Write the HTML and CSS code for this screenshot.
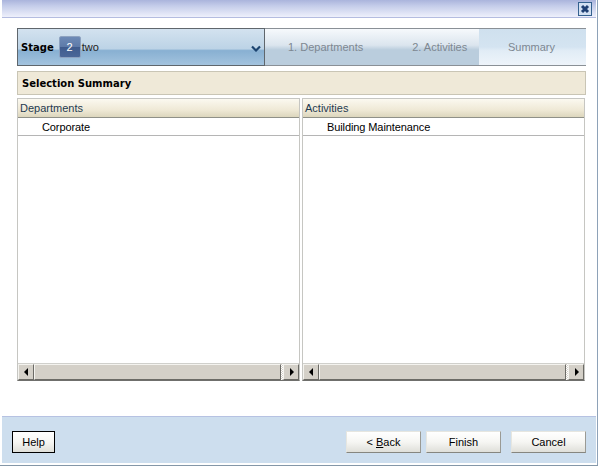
FILE: index.html
```html
<!DOCTYPE html>
<html lang="en">
<head>
<meta charset="utf-8">
<title>Selection Summary</title>
<link rel="stylesheet" href="styles.css">
</head>
<body>
<div class="frame">
<div class="window">
  <header class="titlebar">
    <button class="close" aria-label="Close">
      <svg width="14" height="14" viewBox="0 0 14 14"><path d="M4 4l6 6M10 4l-6 6" stroke="#1f3f73" stroke-width="3" fill="none"/></svg>
    </button>
  </header>
  <main class="content">
    <nav class="train">
      <div class="stage">
        <span class="stage-label">Stage</span>
        <span class="stage-num">2</span>
        <span class="stage-name">two</span>
        <svg class="chevron" width="10" height="7" viewBox="0 0 10 7"><path d="M1 1.500l4 4 4-4" stroke="#1c4470" stroke-width="2.200" fill="none"/></svg>
      </div>
      <div class="steps">
        <span class="step step-one">1. Departments</span>
        <span class="step step-two">2. Activities</span>
      </div>
      <div class="current">Summary</div>
    </nav>
    <h1 class="section">Selection Summary</h1>
    <div class="panels">
      <section class="panel">
        <div class="panel-head">Departments</div>
        <div class="row">Corporate</div>
        <div class="panel-fill"></div>
        <div class="hscroll">
          <span class="sbtn"><svg width="5" height="8" viewBox="0 0 5 8"><path d="M4 0v8L0 4z"/></svg></span>
          <span class="thumb"></span>
          <span class="track"></span>
          <span class="sbtn"><svg width="5" height="8" viewBox="0 0 5 8"><path d="M1 0v8l4-4z"/></svg></span>
        </div>
      </section>
      <section class="panel">
        <div class="panel-head">Activities</div>
        <div class="row">Building Maintenance</div>
        <div class="panel-fill"></div>
        <div class="hscroll">
          <span class="sbtn"><svg width="5" height="8" viewBox="0 0 5 8"><path d="M4 0v8L0 4z"/></svg></span>
          <span class="thumb"></span>
          <span class="track"></span>
          <span class="sbtn"><svg width="5" height="8" viewBox="0 0 5 8"><path d="M1 0v8l4-4z"/></svg></span>
        </div>
      </section>
    </div>
  </main>
  <footer class="footer">
    <button class="btn btn-help">Help</button>
    <div class="actions">
      <button class="btn btn-nav">&lt; <u>B</u>ack</button>
      <button class="btn btn-nav">Finish</button>
      <button class="btn btn-nav btn-cancel">Cancel</button>
    </div>
  </footer>
</div>
</div>
</body>
</html>
```
FILE: styles.css
```css
html, body { margin: 0; padding: 0; background: #fff; }
body { width: 600px; height: 467px; overflow: hidden; font-family: "Liberation Sans", Arial, sans-serif; font-size: 11px; color: #000; }
.frame { box-sizing: border-box; width: 598px; height: 466px; padding-left: 2px; border-bottom: 1px solid #8497a8; }
.window { box-sizing: border-box; width: 596px; height: 465px; padding: 0 1px 2px 0; border-right: 1px solid #8ea2b8; display: flex; flex-direction: column; }
.titlebar { box-sizing: border-box; height: 18px; flex: none; background: linear-gradient(#aab4dc 0, #c5cdea 6px, #eef0fb 100%); border-bottom: 1px solid #b4bce0; display: flex; justify-content: flex-end; align-items: flex-start; padding: 2px 4px 0 0; }
.close { box-sizing: border-box; width: 14px; height: 14px; padding: 0; border: 1px solid #34618f; background: #d3e0f2; display: block; overflow: hidden; }
.close svg { display: block; margin: -1px; }
.content { flex: 1; padding: 10px 10px 0 15px; display: flex; flex-direction: column; min-height: 0; }
.train { box-sizing: border-box; display: flex; height: 38px; flex: none; border-top: 1px solid #8a9096; border-bottom: 1px solid #8a9096; }
.stage { box-sizing: border-box; width: 248px; margin: -1px 0; display: flex; align-items: center; border: 1px solid #5f666c; padding: 0 3px 0 3px; background: linear-gradient(#d3e2ef 0, #bcd3e6 55%, #88b0d2 60%, #a3c3de 100%); }
.stage-label { font-family: "DejaVu Sans", sans-serif; font-weight: 700; font-size: 10px; }
.stage-num { box-sizing: border-box; width: 22px; height: 22px; margin-left: 5px; border-radius: 2px; border: 1px solid #8da2c0; background: linear-gradient(#6d8ab6 0, #5d7aa8 50%, #3f5c8e 52%, #4a6798 100%); color: #fff; font-size: 11px; text-align: center; line-height: 20px; }
.stage-name { margin-left: 1px; font-size: 11px; color: #222; flex: 1; }
.chevron { margin-top: 2px; }
.steps { width: 214px; box-sizing: border-box; display: flex; background: linear-gradient(#f6f9fc 0, #dbe5ee 45%, #bacddd 58%, #bacddd 100%); color: #7d8791; font-size: 11px; align-items: center; white-space: nowrap; }
.step-one { margin-left: 23px; }
.step-two { margin-left: 49px; }
.current { flex: 1; padding-right: 2px; background: linear-gradient(#cfe0ee 0, #d4e4f1 50%, #e1ecf6 60%, #eef4fa 100%); color: #7d8791; font-size: 11px; display: flex; align-items: center; justify-content: center; }
.section { box-sizing: border-box; height: 24px; flex: none; margin: 5px 0 0; padding: 0 0 0 4px; border: 1px solid #c9c5b5; background: #efe9d8; font: 700 10px/23px "DejaVu Sans", sans-serif; }
.panels { display: flex; justify-content: space-between; margin-top: 3px; height: 283px; flex: none; padding-right: 1px; }
.panel { box-sizing: border-box; width: 283px; border: 1px solid #c6c6c2; border-bottom-color: #6f6f6c; display: flex; flex-direction: column; }
.panel-head { box-sizing: border-box; height: 19px; flex: none; padding-left: 2px; border-bottom: 1px solid #8f9088; background: linear-gradient(#fbf9f0 0, #efe9d6 60%, #dcd6bd 100%); color: #1f3a50; font-size: 11px; line-height: 18px; }
.row { box-sizing: border-box; height: 18px; flex: none; padding-left: 24px; border-bottom: 1px solid #b5b5b5; font-size: 11px; letter-spacing: -0.1px; line-height: 18px; }
.panel-fill { flex: 1; }
.hscroll { height: 16px; flex: none; display: flex; background: #d4d0c8; border-top: 1px solid #d0d0cc; }
.sbtn { box-sizing: border-box; width: 16px; flex: none; background: #d4d0c8; border: 1px solid; border-color: #f4f3ef #6c6b66 #6c6b66 #f4f3ef; display: flex; align-items: center; justify-content: center; }
.sbtn path { fill: #000; }
.thumb { box-sizing: border-box; flex: 1; background: #d4d0c8; border: 1px solid; border-color: #f4f3ef #6c6b66 #6c6b66 #f4f3ef; }
.track { width: 2px; flex: none; background: repeating-conic-gradient(#fff 0 25%, #d4d0c8 0 50%) 0 0 / 2px 2px; }
.footer { box-sizing: border-box; height: 47px; flex: none; background: #cddeee; border-top: 1px solid #b6c2e2; padding: 14px 10px 0 10px; display: flex; justify-content: space-between; align-items: flex-start; }
.actions { display: flex; }
.btn { box-sizing: border-box; height: 22px; padding: 0; font-family: "Liberation Sans", Arial, sans-serif; font-size: 11px; color: #000; background: linear-gradient(#fff 0, #f6f6f3 50%, #dfdfd9 100%); border: 1px solid; border-color: #e6e6e0 #9a9a94 #86867f #e6e6e0; }
.btn-help { width: 43px; border: 1px solid #000; }
.btn-nav { width: 75px; margin-left: 5px; }
.btn-cancel { margin-left: 10px; }
```
